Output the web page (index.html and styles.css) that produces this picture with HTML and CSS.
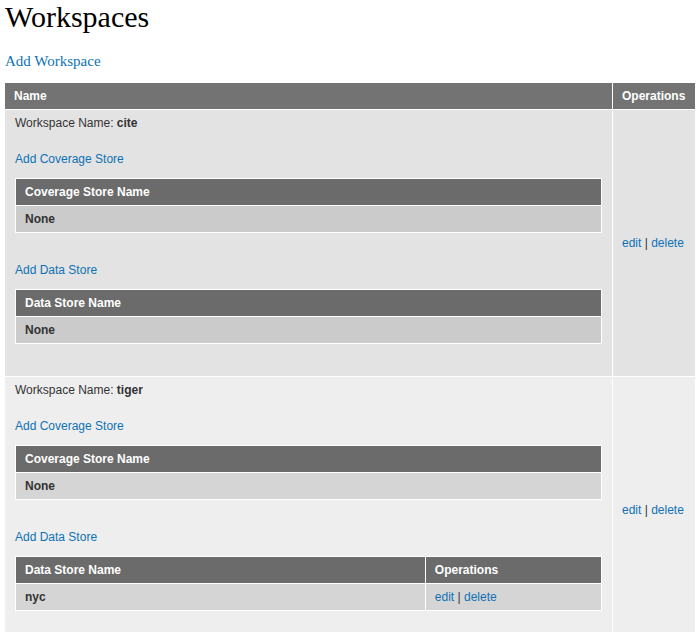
FILE: index.html
```html
<!DOCTYPE html>
<html lang="en">

<head>
	<meta charset="UTF-8">
	<title>Workspaces</title>
	<link rel="stylesheet" href="styles.css">
</head>

<body>
	<h1>Workspaces</h1>
	<p class="add-workspace"><a href="#">Add Workspace</a></p>

	<table class="workspaces">
		<thead>
			<tr>
				<th>Name</th>
				<th class="ops">Operations</th>
			</tr>
		</thead>
		<tbody>
			<tr class="odd">
				<td class="ws-cell">
					<p class="ws-name">Workspace Name: <b>cite</b></p>
					<div class="add-link"><a href="#">Add Coverage Store</a></div>
					<table class="stores">
						<tr><th>Coverage Store Name</th></tr>
						<tr><td>None</td></tr>
					</table>
					<div class="add-link"><a href="#">Add Data Store</a></div>
					<table class="stores">
						<tr><th>Data Store Name</th></tr>
						<tr><td>None</td></tr>
					</table>
				</td>
				<td class="ops"><a href="#">edit</a> | <a href="#">delete</a></td>
			</tr>
			<tr class="even">
				<td class="ws-cell">
					<p class="ws-name">Workspace Name: <b>tiger</b></p>
					<div class="add-link"><a href="#">Add Coverage Store</a></div>
					<table class="stores">
						<tr><th>Coverage Store Name</th></tr>
						<tr><td>None</td></tr>
					</table>
					<div class="add-link"><a href="#">Add Data Store</a></div>
					<table class="stores">
						<tr><th>Data Store Name</th><th class="store-ops">Operations</th></tr>
						<tr><td>nyc</td><td class="store-ops"><a href="#">edit</a> | <a href="#">delete</a></td></tr>
					</table>
				</td>
				<td class="ops"><a href="#">edit</a> | <a href="#">delete</a></td>
			</tr>
		</tbody>
	</table>
</body>

</html>
```

FILE: styles.css
```css
body {
	margin: 0 1px 0 4px;
	font-family: "Liberation Serif", "Times New Roman", serif;
	color: #000;
	background-color: #fff;
}

a {
	color: #0e72b5;
	text-decoration: none;
}

h1 {
	font-size: 30px;
	font-weight: normal;
	line-height: 34px;
	margin: 0 0 0 1px;
}

.add-workspace {
	font-size: 15px;
	line-height: 18px;
	margin: 18px 0 12px 1px;
}

/* outer table */
.workspaces {
	width: 100%;
	border-collapse: separate;
	border-spacing: 1px;
	font-family: "Liberation Sans", Arial, sans-serif;
	font-size: 12px;
	color: #333;
}

.workspaces > thead th {
	background-color: #737373;
	color: #fff;
	font-weight: bold;
	text-align: left;
	line-height: 16px;
	padding: 5px 9px;
}

.workspaces > thead th.ops {
	width: 64px;
	white-space: nowrap;
}

.workspaces > tbody > tr.odd > td {
	background-color: #e3e3e3;
}

.workspaces > tbody > tr.even > td {
	background-color: #eeeeee;
}

.ws-cell {
	padding: 5px 10px 4px 10px;
	vertical-align: top;
}

.workspaces > tbody > tr > td.ops {
	padding: 0 9px;
	vertical-align: middle;
	white-space: nowrap;
}

.ws-name {
	margin: 0 0 20px 0;
	line-height: 16px;
}

.add-link {
	line-height: 16px;
	margin-bottom: 11px;
}

/* inner store tables */
.stores {
	width: 100%;
	border-collapse: separate;
	border-spacing: 1px;
	background-color: #fff;
	margin-bottom: 29px;
}

.stores:last-child {
	margin-bottom: 28px;
}

.stores th {
	background-color: #6b6b6b;
	color: #fff;
	text-align: left;
	line-height: 16px;
	padding: 5px 9px;
}

.stores td {
	font-weight: bold;
	line-height: 16px;
	padding: 5px 9px;
}

.odd .stores td {
	background-color: #cbcbcb;
}

.even .stores td {
	background-color: #d5d5d5;
}

.stores .store-ops {
	width: 30%;
}

.stores td.store-ops {
	font-weight: normal;
}
```
